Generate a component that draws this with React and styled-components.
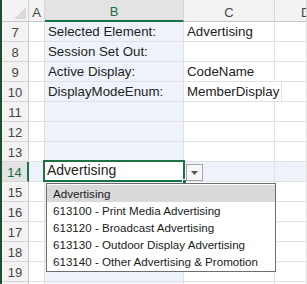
import React from "react";
import styled, { createGlobalStyle } from "styled-components";

const Global = createGlobalStyle`
  html, body { margin: 0; padding: 0; background: #ffffff; }
  body { width: 307px; height: 284px; overflow: hidden; }
  #root { width: 307px; height: 284px; overflow: hidden; }
  * { box-sizing: border-box; }
`;

const COLS = [27, 16, 139, 91];
const FONT = `"Liberation Sans", Arial, sans-serif`;

const Sheet = styled.div`
  position: relative;
  width: 307px;
  height: 284px;
  overflow: hidden;
  border-left: 2px solid #14532d;
  font-family: ${FONT};
  color: #222222;
  background: #ffffff;
`;

const Row = styled.div`
  display: flex;
  height: ${(p) => p.$h}px;
`;

const Corner = styled.div`
  position: relative;
  flex: 0 0 ${COLS[0]}px;
  background: #f3f3f3;
  border-right: 1px solid #d2d2d2;
  border-bottom: 1px solid #c8c8c8;
  svg { position: absolute; right: 2px; bottom: 2px; }
`;

const ColHead = styled.div`
  flex: ${(p) => (p.$w ? `0 0 ${p.$w}px` : "1 1 auto")};
  display: flex;
  align-items: center;
  justify-content: center;
  font-size: 13px;
  padding-top: 3px;
  background: ${(p) => (p.$active ? "#e3e3e3" : "#f3f3f3")};
  color: ${(p) => (p.$active ? "#1e6b3c" : "#444444")};
  border-right: 1px solid #d6d6d6;
  border-bottom: ${(p) => (p.$active ? "2px solid #1e7145" : "1px solid #c8c8c8")};
  white-space: nowrap;
  overflow: hidden;
  ${(p) => (p.$edge ? "justify-content: flex-start; padding-left: 26px;" : "")}
`;

const RowHead = styled.div`
  flex: 0 0 ${COLS[0]}px;
  display: flex;
  align-items: center;
  justify-content: center;
  font-size: 13px;
  padding-top: 1px;
  background: ${(p) => (p.$active ? "#e3e3e3" : "#f3f3f3")};
  color: ${(p) => (p.$active ? "#1e6b3c" : "#444444")};
  border-right: ${(p) => (p.$active ? "2px solid #1e7145" : "1px solid #c8c8c8")};
  border-bottom: 1px solid #d6d6d6;
`;

const Cell = styled.div`
  position: relative;
  flex: ${(p) => (p.$w ? `0 0 ${p.$w}px` : "1 1 auto")};
  display: flex;
  align-items: flex-end;
  padding: 0 2px 2px 3px;
  font-size: 13.3px;
  line-height: 15px;
  white-space: nowrap;
  background: ${(p) => (p.$hl ? "#eef3fb" : "#ffffff")};
  border-right: 1px solid #e1e1e1;
  border-bottom: 1px solid #e1e1e1;
`;

const ActiveBox = styled.div`
  position: absolute;
  left: -2px;
  top: -2px;
  right: -2px;
  bottom: -1px;
  border: 2px solid #1e7145;
  background: #ffffff;
  display: flex;
  align-items: flex-end;
  padding: 0 2px 1px 2px;
  font-size: 14px;
  line-height: 17px;
  color: #222222;
  z-index: 2;
`;

const FillHandle = styled.span`
  position: absolute;
  right: -4px;
  bottom: -4px;
  width: 5px;
  height: 5px;
  background: #1e7145;
  border: 1px solid #ffffff;
`;

const ArrowButton = styled.div`
  position: absolute;
  left: 184px;
  top: 164px;
  width: 17px;
  height: 17px;
  border: 1px solid #a6a6a6;
  background: #f7f7f7;
  display: flex;
  align-items: center;
  justify-content: center;
  z-index: 3;
`;

const List = styled.ul`
  position: absolute;
  left: 44px;
  top: 183px;
  width: 230px;
  margin: 0;
  padding: 1px 0 1px 0;
  list-style: none;
  background: #ffffff;
  border: 1px solid #6e6e6e;
  z-index: 3;
  font-family: ${FONT};
`;

const Item = styled.li`
  height: 17px;
  line-height: 17px;
  padding-left: 6px;
  font-size: 11.6px;
  color: #1a1a1a;
  white-space: nowrap;
  background: ${(p) => (p.$sel ? "#d9d9d9" : "transparent")};
`;

const rows = [
  { n: 7, b: "Selected Element:", c: "Advertising" },
  { n: 8, b: "Session Set Out:", c: "" },
  { n: 9, b: "Active Display:", c: "CodeName" },
  { n: 10, b: "DisplayModeEnum:", c: "MemberDisplay" },
  { n: 11 }, { n: 12 }, { n: 13 }, { n: 14, active: true },
  { n: 15 }, { n: 16 }, { n: 17 }, { n: 18 }, { n: 19 }, { n: 20, hidden: true },
];

const items = [
  "Advertising",
  "613100 - Print Media Advertising",
  "613120 - Broadcast Advertising",
  "613130 - Outdoor Display Advertising",
  "613140 - Other Advertising & Promotion",
];

export default function App() {
  return (
    <>
      <Global />
      <Sheet>
        <Row $h={22}>
          <Corner>
            <svg width="12" height="12" viewBox="0 0 12 12">
              <polygon points="12,0 12,12 0,12" fill="#dadada" />
            </svg>
          </Corner>
          <ColHead $w={COLS[1]}>A</ColHead>
          <ColHead $w={COLS[2]} $active>B</ColHead>
          <ColHead $w={COLS[3]}>C</ColHead>
          <ColHead $edge>D</ColHead>
        </Row>
        {rows.map((r) => (
          <Row key={r.n} $h={20}>
            <RowHead $active={r.active}>{r.hidden ? "" : r.n}</RowHead>
            <Cell $w={COLS[1]} $hl={r.active} />
            <Cell $w={COLS[2]} $hl>
              {r.b}
              {r.active && (
                <ActiveBox>
                  Advertising
                  <FillHandle />
                </ActiveBox>
              )}
            </Cell>
            <Cell $w={COLS[3]} $hl={r.active}>{r.c}</Cell>
            <Cell $hl={r.active} />
          </Row>
        ))}
        <ArrowButton>
          <svg width="7" height="4" viewBox="0 0 7 4">
            <polygon points="0,0 7,0 3.5,4" fill="#555555" />
          </svg>
        </ArrowButton>
        <List>
          {items.map((t, i) => (
            <Item key={t} $sel={i === 0}>{t}</Item>
          ))}
        </List>
      </Sheet>
    </>
  );
}
